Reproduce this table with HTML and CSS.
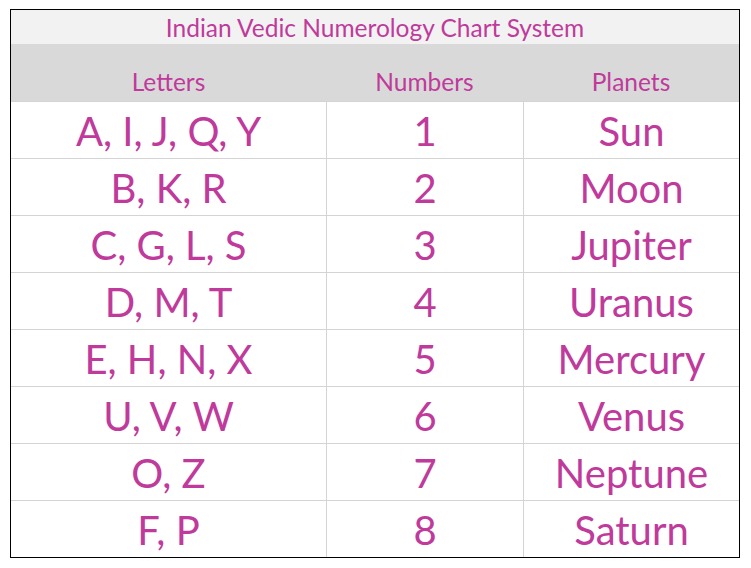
FILE: index.html
```html
<!DOCTYPE html>
<html>
<head>
<meta charset="utf-8">
<link rel="stylesheet" href="styles.css">
</head>
<body>
<div class="chart">
  <div class="title">Indian Vedic Numerology Chart System</div>
  <div class="head">
    <div class="hcell">Letters</div>
    <div class="hcell">Numbers</div>
    <div class="hcell">Planets</div>
  </div>
  <div class="row"><div class="cell">A, I, J, Q, Y</div><div class="cell sep">1</div><div class="cell sep">Sun</div></div>
  <div class="row"><div class="cell">B, K, R</div><div class="cell sep">2</div><div class="cell sep">Moon</div></div>
  <div class="row"><div class="cell">C, G, L, S</div><div class="cell sep">3</div><div class="cell sep">Jupiter</div></div>
  <div class="row"><div class="cell">D, M, T</div><div class="cell sep">4</div><div class="cell sep">Uranus</div></div>
  <div class="row"><div class="cell">E, H, N, X</div><div class="cell sep">5</div><div class="cell sep">Mercury</div></div>
  <div class="row"><div class="cell">U, V, W</div><div class="cell sep">6</div><div class="cell sep">Venus</div></div>
  <div class="row"><div class="cell">O, Z</div><div class="cell sep">7</div><div class="cell sep">Neptune</div></div>
  <div class="row"><div class="cell">F, P</div><div class="cell sep">8</div><div class="cell sep">Saturn</div></div>
</div>
</body>
</html>
```
FILE: styles.css
```css
html, body {
  margin: 0;
  padding: 0;
  background: #ffffff;
}
body {
  padding: 9px 0 0 10px;
  font-family: Lato, "Open Sans", sans-serif;
  color: #c03a9c;
}
.chart {
  width: 728px;
  border: 1px solid #000;
  display: flex;
  flex-direction: column;
}
.title {
  height: 34px;
  background: #f2f2f2;
  font-size: 24.5px;
  line-height: 36px;
  text-align: center;
}
.head {
  height: 57px;
  background: #d9d9d9;
  display: grid;
  grid-template-columns: 315px 197px 216px;
}
.hcell {
  font-size: 24.5px;
  display: flex;
  align-items: flex-end;
  justify-content: center;
  padding-bottom: 5px;
}
.row {
  display: grid;
  grid-template-columns: 315px 197px 216px;
  height: 56px;
  border-top: 1px solid #d4d4d4;
}
.row:first-of-type { border-top: none; }
.cell {
  font-size: 40px;
  display: flex;
  align-items: center;
  justify-content: center;
  padding-top: 2px;
}
.sep {
  border-left: 1px solid #d4d4d4;
}
```
